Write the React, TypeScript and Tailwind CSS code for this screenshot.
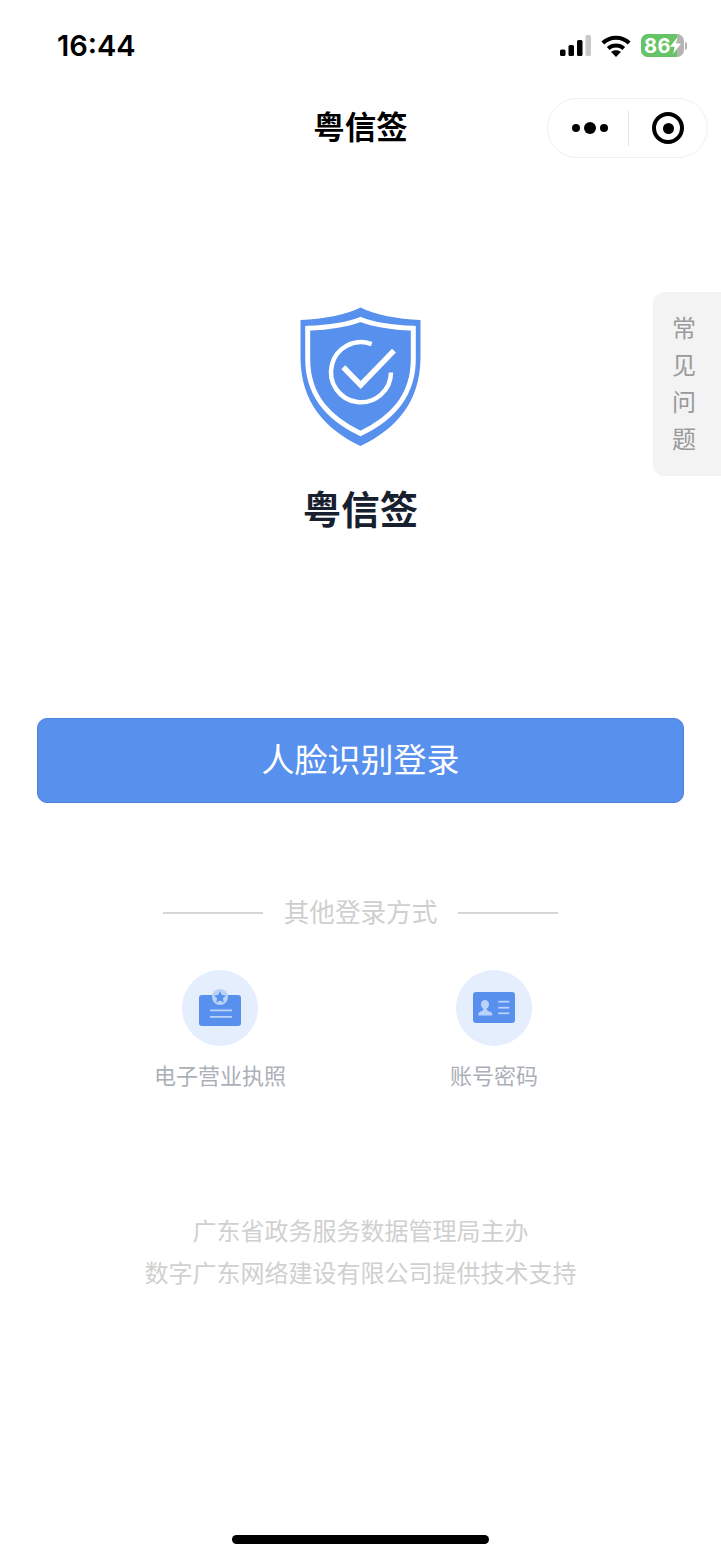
import React from "react";

const cjk = "font-['Liberation_Sans','Noto_Sans_CJK_SC',sans-serif]";

function SignalIcon() {
  return (
    <svg width="31" height="21" viewBox="0 0 31 21">
      <rect x="0" y="14.5" width="5.5" height="6.5" rx="1.5" fill="#000" />
      <rect x="8.5" y="10" width="5.5" height="11" rx="1.5" fill="#000" />
      <rect x="17" y="5" width="5.5" height="16" rx="1.5" fill="#000" />
      <rect x="25.5" y="0" width="5.5" height="21" rx="1.5" fill="#c9c9c9" />
    </svg>
  );
}

function WifiIcon() {
  return (
    <svg width="30" height="22" viewBox="0 0 30 22" fill="none">
      <path d="M1.8 8C9.2 1 20.8 1 28.2 8" stroke="#000" strokeWidth="4" />
      <path d="M7.2 13.5C11.5 9.6 18.5 9.6 22.8 13.5" stroke="#000" strokeWidth="4" />
      <path d="M15 22L10 16.8C13 14.6 17 14.6 20 16.8Z" fill="#000" />
    </svg>
  );
}

function Battery() {
  return (
    <div className="flex items-center">
      <div className="relative flex h-[23px] w-[43px] items-center overflow-hidden rounded-[7px] bg-[#b4b4b4]">
        <div className="flex h-full w-[36px] items-center bg-[#65c466] pl-[3px]">
          <span className="font-['Inter',sans-serif] text-[20px] font-bold leading-none tracking-[0.5px] text-white">86</span>
        </div>
        <svg className="absolute left-[28px] top-[3px]" width="13" height="17" viewBox="0 0 13 17">
          <path d="M8.5 0L1 9.8H5.6L4.2 17L12 6.6H7.2Z" fill="#fff" />
        </svg>
      </div>
      <div className="ml-[1px] h-[8px] w-[2px] rounded-r-full bg-[#b4b4b4]" />
    </div>
  );
}

function ShieldLogo() {
  return (
    <svg width="122" height="140" viewBox="0 0 122 140" fill="none">
      <path
        d="M60.5 0.5C45 8 24 12 0.5 13V50C0.5 95 25 122 60.5 139C96 122 120.5 95 120.5 50V13C97 12 76 8 60.5 0.5Z"
        fill="#5890ee"
      />
      <path
        d="M60.5 12.5C45 18.5 28 20.5 7.7 21.3V52C7.7 90 30 112 60.5 126.5C91 112 113.3 90 113.3 52V21.3C93 20.5 76 18.5 60.5 12.5Z"
        stroke="#fff"
        strokeWidth="5"
      />
      <path d="M71.7 37.2A30 30 0 1 0 91 65.5" stroke="#fff" strokeWidth="4.5" />
      <path d="M43.3 60.3L60.7 78L94 43.7" stroke="#fff" strokeWidth="5.5" />
    </svg>
  );
}

function LicenseIcon() {
  return (
    <svg width="44" height="38" viewBox="0 0 44 38">
      <rect x="1" y="6" width="42" height="31" rx="3" fill="#5890ee" />
      <circle cx="22" cy="8" r="8" fill="#b9d2f8" />
      <path d="M22 2.2L23.8 6L28 6.5L24.9 9.3L25.7 13.4L22 11.4L18.3 13.4L19.1 9.3L16 6.5L20.2 6Z" fill="#5890ee" />
      <rect x="12" y="20.5" width="22" height="1.8" fill="#b9d2f8" />
      <rect x="12" y="27" width="22" height="1.8" fill="#b9d2f8" />
    </svg>
  );
}

function AccountIcon() {
  return (
    <svg width="42" height="32" viewBox="0 0 42 32">
      <rect x="0" y="0" width="42" height="31" rx="3" fill="#5890ee" />
      <ellipse cx="12" cy="12.5" rx="4" ry="4.6" fill="#b9d2f8" />
      <path d="M5.3 22C5.3 20 8.5 19.5 10.3 18V15.5H13.7V18C15.5 19.5 19.3 20 19.3 22V22.5C19.3 23.2 18.8 23.6 18.2 23.6H6.4C5.8 23.6 5.3 23.2 5.3 22.5Z" fill="#b9d2f8" />
      <rect x="25.3" y="8.8" width="11" height="1.8" fill="#b9d2f8" />
      <rect x="25.3" y="14.8" width="11" height="1.8" fill="#b9d2f8" />
      <rect x="25.3" y="20.4" width="11" height="1.8" fill="#b9d2f8" />
    </svg>
  );
}

function LoginOption({ label, icon }: { label: string; icon: React.ReactNode }) {
  return (
    <div className="flex w-[132px] flex-col items-center">
      <div className="flex h-[76px] w-[76px] items-center justify-center rounded-full bg-[#e4eefc]">{icon}</div>
      <div className="mt-[15px] text-[22px] leading-[32px] text-[#abb0b8]">{label}</div>
    </div>
  );
}

export default function App() {
  return (
    <div className={`relative flex h-[1559px] w-[721px] flex-col overflow-hidden bg-white ${cjk}`}>
      {/* 状态栏 */}
      <div className="flex h-[92px] items-start justify-between pl-[57px] pr-[34px] pt-[28px]">
        <span className="font-['Inter',sans-serif] text-[29px] font-semibold leading-[36px] text-black">16:44</span>
        <div className="mt-[6px] flex items-center gap-[10px]">
          <SignalIcon />
          <WifiIcon />
          <Battery />
        </div>
      </div>

      {/* 导航 */}
      <div className="relative flex h-[72px] items-center justify-center">
        <span className="text-[31.5px] font-bold leading-[44px] text-black">粤信签</span>
        <div className="absolute right-[13px] top-[6px] flex h-[60px] w-[161px] items-center rounded-full border border-[#f0f0f0] bg-white">
          <div className="flex w-[80px] items-center justify-center gap-[4px] pl-[4px]">
            <span className="h-[8px] w-[8px] rounded-full bg-black" />
            <span className="h-[12px] w-[12px] rounded-full bg-black" />
            <span className="h-[8px] w-[8px] rounded-full bg-black" />
          </div>
          <div className="h-[35px] w-px bg-[#e2e2e2]" />
          <div className="flex flex-1 items-center justify-center">
            <div className="flex h-[32px] w-[32px] items-center justify-center rounded-full border-[4px] border-black">
              <span className="h-[11px] w-[11px] rounded-full bg-black" />
            </div>
          </div>
        </div>
      </div>

      {/* 常见问题 */}
      <div className="absolute right-0 top-[292px] flex h-[184px] w-[68px] flex-col items-center justify-center rounded-l-[12px] bg-[#f3f3f3] pr-[6px] text-[24px] leading-[37px] text-[#9a9a9a]">
        <span>常</span>
        <span>见</span>
        <span>问</span>
        <span>题</span>
      </div>

      {/* 标识 */}
      <div className="mt-[143px] flex flex-col items-center">
        <ShieldLogo />
        <div className="mt-[39px] text-[38.5px] font-bold leading-[50px] text-[#17202e]">粤信签</div>
      </div>

      {/* 登录按钮 */}
      <div className="mx-[37px] mt-[182px] flex h-[85px] items-center justify-center rounded-[10px] border border-[#4f7fd6] bg-[#5890ee] text-[33px] text-white">
        人脸识别登录
      </div>

      {/* 其他登录方式 */}
      <div className="mt-[92px] flex items-center justify-center">
        <div className="h-[2px] w-[100px] bg-[#d6d6d6]" />
        <span className="mx-[21px] text-[25.6px] leading-[36px] text-[#cfcfcf]">其他登录方式</span>
        <div className="h-[2px] w-[100px] bg-[#d6d6d6]" />
      </div>
      <div className="mt-[39px] flex justify-center gap-[142px] pr-[7px]">
        <LoginOption label="电子营业执照" icon={<LicenseIcon />} />
        <LoginOption label="账号密码" icon={<AccountIcon />} />
      </div>

      {/* 页脚 */}
      <div className="mt-[118px] text-center text-[24px] leading-[42px] text-[#d0d0d0]">
        <div>广东省政务服务数据管理局主办</div>
        <div>数字广东网络建设有限公司提供技术支持</div>
      </div>

      {/* Home 指示条 */}
      <div className="mb-[15px] mt-auto flex justify-center">
        <div className="h-[9px] w-[257px] rounded-full bg-black" />
      </div>
    </div>
  );
}
